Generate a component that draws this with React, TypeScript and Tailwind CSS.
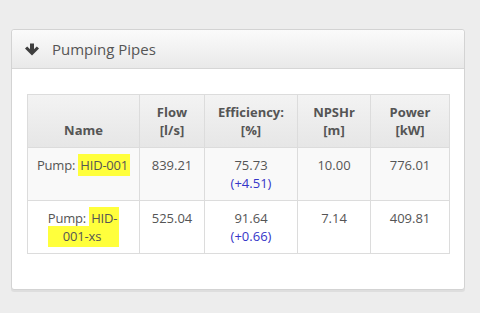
interface PumpRow {
  id: string[];
  flow: string;
  efficiency: string;
  delta: string;
  npshr: string;
  power: string;
}

const rows: PumpRow[] = [
  { id: ['HID-001'], flow: '839.21', efficiency: '75.73', delta: '(+4.51)', npshr: '10.00', power: '776.01' },
  { id: ['HID-', '001-xs'], flow: '525.04', efficiency: '91.64', delta: '(+0.66)', npshr: '7.14', power: '409.81' },
];

function ArrowDown() {
  return (
    <svg viewBox="0 0 14 13" className="h-[13px] w-[14px] text-[#3f3f3f]" fill="currentColor">
      <path d="M5 0.5 H9 V6.2 L11.8 3.4 L14 5.6 L7 12.6 L0 5.6 L2.2 3.4 L5 6.2 Z" />
    </svg>
  );
}

export default function App() {
  return (
    <div
      className="h-[313px] w-[480px] bg-[#ededed] pl-[11px] pt-[29px]"
      style={{ fontFamily: '"Open Sans", "Liberation Sans", sans-serif' }}
    >
      <div className="w-[454px] rounded-[3px] border border-[#d3d3d3] bg-white shadow-[0_2px_0_#dedede]">
        {/* Header */}
        <div className="flex h-[39px] items-center gap-[13px] rounded-t-[3px] border-b border-[#d6d6d6] bg-gradient-to-b from-[#fbfbfb] to-[#e9e9e9] pl-[13px]">
          <ArrowDown />
          <span className="text-[15px] text-[#555]">Pumping Pipes</span>
        </div>

        {/* Body */}
        <div className="px-[15px] pb-[35px] pt-[25px]">
          <table className="w-[422px] table-fixed border-collapse text-center text-[13px] leading-[18px] text-[#555]">
            <colgroup>
              <col className="w-[112px]" />
              <col className="w-[65px]" />
              <col className="w-[93px]" />
              <col className="w-[73px]" />
              <col className="w-[79px]" />
            </colgroup>
            <thead>
              <tr className="bg-gradient-to-b from-[#f3f3f3] to-[#e6e6e6]">
                <th className="border border-[#dcdcdc] px-2 py-2 align-bottom font-bold">Name</th>
                <th className="border border-[#dcdcdc] px-2 py-2 align-bottom font-bold">Flow<br />[l/s]</th>
                <th className="border border-[#dcdcdc] px-2 py-2 align-bottom font-bold">Efficiency:<br />[%]</th>
                <th className="border border-[#dcdcdc] px-2 py-2 align-bottom font-bold">NPSHr<br />[m]</th>
                <th className="border border-[#dcdcdc] px-2 py-2 align-bottom font-bold">Power<br />[kW]</th>
              </tr>
            </thead>
            <tbody>
              {rows.map((r, i) => (
                <tr key={r.flow} className={i === 0 ? 'bg-[#f9f9f9]' : 'bg-white'}>
                  <td className="border border-[#dcdcdc] px-[2px] py-2 align-top tracking-[-0.2px]">
                    Pump:{' '}
                    <span className="bg-[#ffff3c] px-[2px] py-[2px]">{r.id[0]}</span>
                    {r.id[1] && (
                      <>
                        <br />
                        <span className="bg-[#ffff3c] pb-[2px] pl-[15px] pr-[18px] pt-[1px]">{r.id[1]}</span>
                      </>
                    )}
                  </td>
                  <td className="border border-[#dcdcdc] px-2 py-2 align-top">{r.flow}</td>
                  <td className="border border-[#dcdcdc] px-2 py-2 align-top">
                    {r.efficiency}
                    <br />
                    <span className="text-[#3535c8]">{r.delta}</span>
                  </td>
                  <td className="border border-[#dcdcdc] px-2 py-2 align-top">{r.npshr}</td>
                  <td className="border border-[#dcdcdc] px-2 py-2 align-top">{r.power}</td>
                </tr>
              ))}
            </tbody>
          </table>
        </div>
      </div>
    </div>
  );
}
